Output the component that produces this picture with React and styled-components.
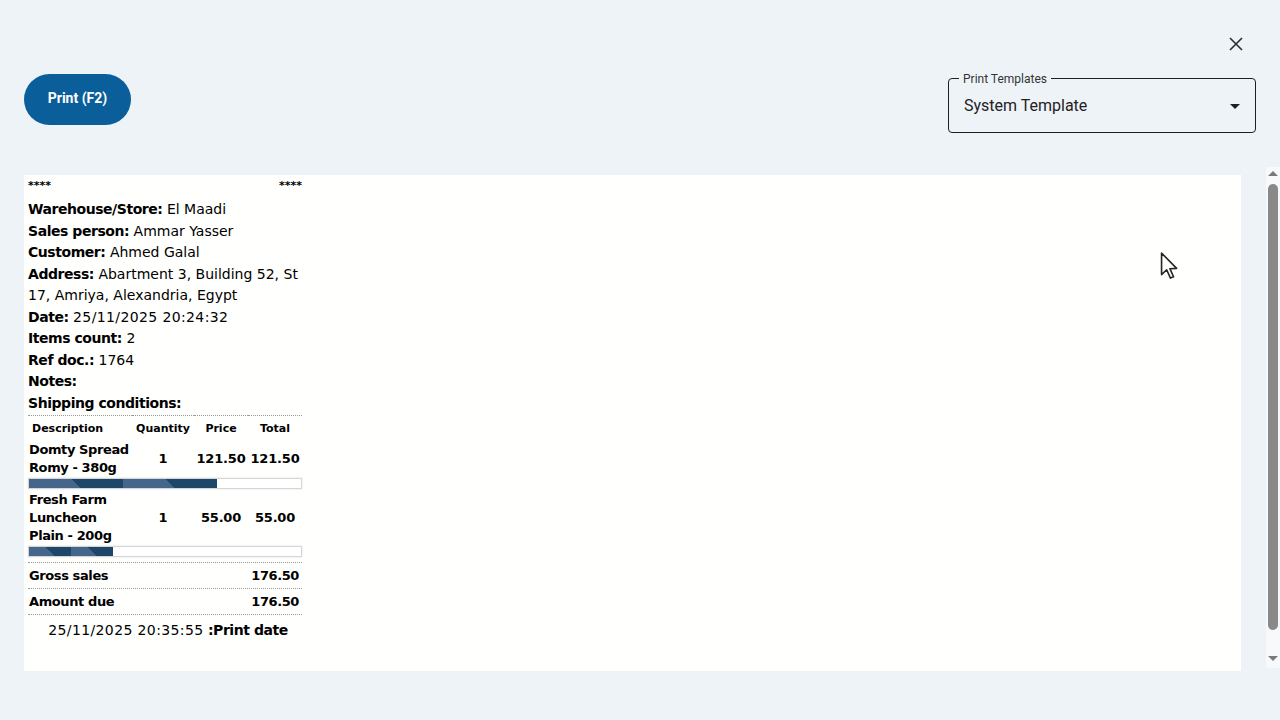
import React from 'react';
import styled, { createGlobalStyle } from 'styled-components';

const GlobalStyle = createGlobalStyle`
  html, body {
    margin: 0;
    padding: 0;
    background: #eef3f8;
    font-family: Roboto, "Liberation Sans", Arial, sans-serif;
  }
  * {
    box-sizing: border-box;
  }
`;

const items = [
  { name: 'Domty Spread Romy - 380g', qty: 1, price: '121.50', total: '121.50', progress: 69 },
  { name: 'Fresh Farm Luncheon Plain - 200g', qty: 1, price: '55.00', total: '55.00', progress: 31 },
];

const fields = [
  ['Warehouse/Store:', 'El Maadi'],
  ['Sales person:', 'Ammar Yasser'],
  ['Customer:', 'Ahmed Galal'],
  ['Address:', 'Abartment 3, Building 52, St 17, Amriya, Alexandria, Egypt'],
  ['Date:', '25/11/2025 20:24:32'],
  ['Items count:', '2'],
  ['Ref doc.:', '1764'],
  ['Notes:', ''],
  ['Shipping conditions:', ''],
];

function CloseIcon() {
  return (
    <svg width="16" height="16" viewBox="0 0 16 16">
      <path d="M2 2 L14 14 M14 2 L2 14" stroke="#2b2b2b" strokeWidth="1.6" fill="none" />
    </svg>
  );
}

function ArrowDrop() {
  return (
    <svg width="24" height="24" viewBox="0 0 24 24">
      <path d="M7 10l5 5 5-5z" fill="#1f1f1f" />
    </svg>
  );
}

function Pointer() {
  return (
    <svg width="19" height="28" viewBox="-0.8 -0.8 13.4 20.8">
      <path
        d="M0 0 L0 16 L3.8 12.4 L6.6 18.6 L8.9 17.6 L6.2 11.6 L11.2 11.4 Z"
        fill="#ffffff"
        stroke="#262626"
        strokeWidth="1.2"
        strokeLinejoin="round"
      />
    </svg>
  );
}

export default function App() {
  return (
    <Page>
      <GlobalStyle />
      <CloseRow>
        <CloseButton aria-label="close">
          <CloseIcon />
        </CloseButton>
      </CloseRow>
      <Toolbar>
        <PrintButton>Print (F2)</PrintButton>
        <SelectBox>
          <SelectLabel>Print Templates</SelectLabel>
          <SelectValue>System Template</SelectValue>
          <ArrowDrop />
        </SelectBox>
      </Toolbar>
      <Body>
        <Preview>
          <Receipt>
            <Stars>
              <span>****</span>
              <span>****</span>
            </Stars>
            <Fields>
              {fields.map(([label, value]) => (
                <Field key={label}>
                  <Label>{label}</Label> <Value $wide={value.includes('/')}>{value}</Value>
                </Field>
              ))}
            </Fields>
            <ItemsTable>
              <colgroup>
                <col style={{ width: 104 }} />
                <col style={{ width: 62 }} />
                <col style={{ width: 54 }} />
                <col style={{ width: 54 }} />
              </colgroup>
              <thead>
                <tr>
                  <HeadCell $left>Description</HeadCell>
                  <HeadCell>Quantity</HeadCell>
                  <HeadCell>Price</HeadCell>
                  <HeadCell>Total</HeadCell>
                </tr>
              </thead>
              <tbody>
                {items.map((item) => (
                  <React.Fragment key={item.name}>
                    <tr>
                      <NameCell>{item.name}</NameCell>
                      <NumCell>{item.qty}</NumCell>
                      <NumCell>{item.price}</NumCell>
                      <NumCell>{item.total}</NumCell>
                    </tr>
                    <tr>
                      <BarCell colSpan={4}>
                        <BarTrack>
                          <BarFill style={{ width: `${item.progress}%` }} />
                        </BarTrack>
                      </BarCell>
                    </tr>
                  </React.Fragment>
                ))}
              </tbody>
            </ItemsTable>
            <Totals>
              <TotalRow>
                <span>Gross sales</span>
                <span>176.50</span>
              </TotalRow>
              <TotalRow>
                <span>Amount due</span>
                <span>176.50</span>
              </TotalRow>
            </Totals>
            <PrintDate>
              <Value $wide>25/11/2025 20:35:55</Value> <Label>:Print date</Label>
            </PrintDate>
          </Receipt>
          <Cursor>
            <Pointer />
          </Cursor>
        </Preview>
        <ScrollBar>
          <ScrollArrow $up />
          <ScrollThumb />
          <ScrollArrow />
        </ScrollBar>
      </Body>
    </Page>
  );
}

const Page = styled.div`
  width: 1280px;
  height: 720px;
  overflow: hidden;
  display: flex;
  flex-direction: column;
`;

const CloseRow = styled.div`
  display: flex;
  justify-content: flex-end;
  padding: 30px 30px 0 0;
`;

const CloseButton = styled.button`
  width: 28px;
  height: 28px;
  border: none;
  background: transparent;
  padding: 0;
  display: flex;
  align-items: center;
  justify-content: center;
  cursor: pointer;
`;

const Toolbar = styled.div`
  display: flex;
  justify-content: space-between;
  align-items: flex-start;
  padding: 0 24px;
  margin-top: 16px;
`;

const PrintButton = styled.button`
  width: 107px;
  height: 51px;
  border: none;
  border-radius: 26px;
  background: #0a5f9a;
  color: #ffffff;
  font-family: Roboto, sans-serif;
  font-weight: 700;
  font-size: 14px;
  padding: 0 0 3px;
  cursor: pointer;
`;

const SelectBox = styled.div`
  position: relative;
  margin-top: 4px;
  width: 308px;
  height: 55px;
  border: 1px solid #1f1f1f;
  border-radius: 4px;
  display: flex;
  align-items: center;
  justify-content: space-between;
  padding: 0 8px 0 15px;
`;

const SelectLabel = styled.span`
  position: absolute;
  top: -8px;
  left: 10px;
  padding: 0 4px;
  background: #eef3f8;
  font-size: 12px;
  line-height: 16px;
  color: #333333;
`;

const SelectValue = styled.span`
  font-size: 16px;
  color: #222222;
`;

const Body = styled.div`
  display: flex;
  margin-top: 34px;
  height: 504px;
`;

const Preview = styled.div`
  position: relative;
  margin: 8px 0 0 24px;
  width: 1217px;
  height: 496px;
  background: #fffffd;
  padding: 4px;
`;

const Receipt = styled.div`
  width: 274px;
  font-family: "DejaVu Sans", Verdana, sans-serif;
  color: #000000;
`;

const Stars = styled.div`
  display: flex;
  justify-content: space-between;
  font-size: 11px;
  font-weight: 700;
  line-height: 14px;
`;

const Fields = styled.div`
  margin-top: 6px;
`;

const Field = styled.div`
  font-size: 14px;
  line-height: 21.5px;
`;

const Label = styled.b`
  font-weight: 700;
  letter-spacing: -0.45px;
`;

const Value = styled.span`
  letter-spacing: ${(p) => (p.$wide ? '0.38px' : '0')};
`;

const ItemsTable = styled.table`
  width: 274px;
  margin-top: 1px;
  table-layout: fixed;
  border-collapse: collapse;
  border-top: 1px dotted #9a9a9a;
`;

const HeadCell = styled.th`
  font-size: 11px;
  font-weight: 700;
  height: 25px;
  padding: 0 0 0 ${(p) => (p.$left ? '4px' : '0')};
  text-align: ${(p) => (p.$left ? 'left' : 'center')};
`;

const NameCell = styled.td`
  font-size: 13px;
  font-weight: 700;
  line-height: 18px;
  letter-spacing: -0.4px;
  padding: 0 2px 0 1px;
`;

const NumCell = styled.td`
  font-size: 13px;
  font-weight: 700;
  letter-spacing: -0.2px;
  text-align: center;
  padding: 0;
`;

const BarCell = styled.td`
  padding: 1px 0 2px;
`;

const BarTrack = styled.div`
  height: 11px;
  border: 1px solid #d6d6d6;
  box-shadow: 0 0 2px rgba(0, 0, 0, 0.12);
  background: #ffffff;
`;

const BarFill = styled.div`
  height: 100%;
  background-image: linear-gradient(45deg, #44668a 0 50%, #1d4669 50% 100%);
  background-size: 50% 100%;
`;

const Totals = styled.div`
  margin-top: 3px;
`;

const TotalRow = styled.div`
  display: flex;
  justify-content: space-between;
  align-items: center;
  height: 26px;
  padding: 0 3px 0 1px;
  border-top: 1px dotted #9a9a9a;
  font-size: 13px;
  font-weight: 700;
  letter-spacing: -0.4px;
`;

const PrintDate = styled.div`
  border-top: 1px dotted #9a9a9a;
  text-align: center;
  font-size: 14px;
  line-height: 28px;
  padding: 1px 0 0 6px;
`;

const Cursor = styled.div`
  position: absolute;
  left: 1136px;
  top: 77px;
  pointer-events: none;
`;

const ScrollBar = styled.div`
  margin-left: auto;
  width: 14px;
  height: 501px;
  background: #f7f9fb;
  display: flex;
  flex-direction: column;
  align-items: center;
  padding: 4px 0;
`;

const ScrollArrow = styled.div`
  width: 0;
  height: 0;
  border-left: 5px solid transparent;
  border-right: 5px solid transparent;
  ${(p) => (p.$up ? 'border-bottom: 5px solid #7a7a7a;' : 'border-top: 5px solid #7a7a7a;')}
  margin: ${(p) => (p.$up ? '0 0 8px' : 'auto 0 3px')};
`;

const ScrollThumb = styled.div`
  width: 10px;
  height: 446px;
  border-radius: 5px;
  background: #898989;
`;
